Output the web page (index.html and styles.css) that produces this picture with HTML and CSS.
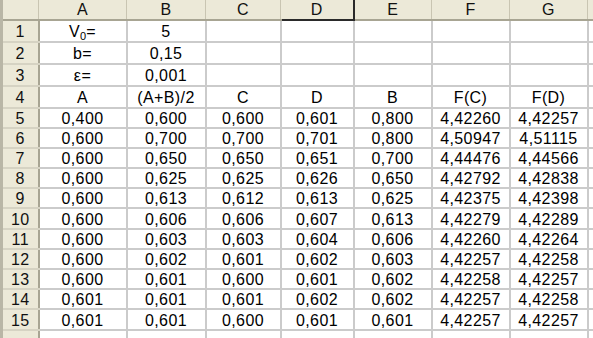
FILE: index.html
```html
<!DOCTYPE html>
<html>
<head>
<meta charset="utf-8">
<link rel="stylesheet" href="styles.css">
</head>
<body>
<table class="sheet">
  <colgroup>
    <col class="c-h"><col class="c-a"><col class="c-b"><col class="c-c"><col class="c-d"><col class="c-e"><col class="c-f"><col class="c-g"><col class="c-x">
  </colgroup>
  <thead>
    <tr class="r-head">
      <th class="corner"></th><th>A</th><th>B</th><th>C</th><th class="active">D</th><th>E</th><th>F</th><th>G</th><th></th>
    </tr>
  </thead>
  <tbody>
    <tr class="r-tall"><th>1</th><td>V<sub>0</sub>=</td><td>5</td><td></td><td></td><td></td><td></td><td></td><td></td></tr>
    <tr class="r-tall"><th>2</th><td>b=</td><td>0,15</td><td></td><td></td><td></td><td></td><td></td><td></td></tr>
    <tr class="r-tall"><th>3</th><td>ε=</td><td>0,001</td><td></td><td></td><td></td><td></td><td></td><td></td></tr>
    <tr class="r-tall"><th>4</th><td>A</td><td>(A+B)/2</td><td>C</td><td>D</td><td>B</td><td>F(C)</td><td>F(D)</td><td></td></tr>
    <tr class="r-n"><th>5</th><td>0,400</td><td>0,600</td><td>0,600</td><td>0,601</td><td>0,800</td><td>4,42260</td><td>4,42257</td><td></td></tr>
    <tr class="r-n"><th>6</th><td>0,600</td><td>0,700</td><td>0,700</td><td>0,701</td><td>0,800</td><td>4,50947</td><td>4,51115</td><td></td></tr>
    <tr class="r-n"><th>7</th><td>0,600</td><td>0,650</td><td>0,650</td><td>0,651</td><td>0,700</td><td>4,44476</td><td>4,44566</td><td></td></tr>
    <tr class="r-n"><th>8</th><td>0,600</td><td>0,625</td><td>0,625</td><td>0,626</td><td>0,650</td><td>4,42792</td><td>4,42838</td><td></td></tr>
    <tr class="r-n"><th>9</th><td>0,600</td><td>0,613</td><td>0,612</td><td>0,613</td><td>0,625</td><td>4,42375</td><td>4,42398</td><td></td></tr>
    <tr class="r-w"><th>10</th><td>0,600</td><td>0,606</td><td>0,606</td><td>0,607</td><td>0,613</td><td>4,42279</td><td>4,42289</td><td></td></tr>
    <tr class="r-n"><th>11</th><td>0,600</td><td>0,603</td><td>0,603</td><td>0,604</td><td>0,606</td><td>4,42260</td><td>4,42264</td><td></td></tr>
    <tr class="r-n"><th>12</th><td>0,600</td><td>0,602</td><td>0,601</td><td>0,602</td><td>0,603</td><td>4,42257</td><td>4,42258</td><td></td></tr>
    <tr class="r-n"><th>13</th><td>0,600</td><td>0,601</td><td>0,600</td><td>0,601</td><td>0,602</td><td>4,42258</td><td>4,42257</td><td></td></tr>
    <tr class="r-n"><th>14</th><td>0,601</td><td>0,601</td><td>0,601</td><td>0,602</td><td>0,602</td><td>4,42257</td><td>4,42258</td><td></td></tr>
    <tr class="r-w"><th>15</th><td>0,601</td><td>0,601</td><td>0,600</td><td>0,601</td><td>0,601</td><td>4,42257</td><td>4,42257</td><td></td></tr>
    <tr class="r-n"><th></th><td></td><td></td><td></td><td></td><td></td><td></td><td></td><td></td></tr>
  </tbody>
</table>
</body>
</html>
```

FILE: styles.css
```css
html, body {
  margin: 0;
  padding: 0;
  background: #ffffff;
  overflow: hidden;
}

.sheet {
  border-collapse: collapse;
  table-layout: fixed;
  width: 610px;
  font-family: "Liberation Sans", Arial, sans-serif;
  font-size: 16px;
  letter-spacing: 0.4px;
  color: #000000;
}

.c-h { width: 37px; }
.c-a { width: 88px; }
.c-b { width: 79px; }
.c-c { width: 75px; }
.c-d { width: 73px; }
.c-e { width: 78px; }
.c-f { width: 78px; }
.c-g { width: 78px; }
.c-x { width: 24px; }

.sheet th,
.sheet td {
  padding: 2px 0 0 0;
  text-align: center;
  vertical-align: middle;
  line-height: 16px;
  white-space: nowrap;
  overflow: hidden;
}

.sheet td {
  border: 2px solid #cbcbcb;
}

.sheet th {
  font-weight: normal;
  background: #ece9d8;
  color: #111111;
}

.r-head { height: 20px; }
.r-tall { height: 22px; }
.r-n { height: 20px; }
.r-w { height: 21px; }

.r-head th {
  border-right: 1px solid #c9c5b2;
  border-bottom: 2px solid #a8a593;
  padding-top: 1px;
}

.r-head th.corner {
  border-left: 3px solid #b9b6a6;
}

.r-head th.active {
  border-bottom: 2px solid #2a2a2a;
  border-right: 2px solid #2a2a2a;
}

tbody th {
  border-left: 3px solid #b9b6a6;
  border-right: 2px solid #a8a593;
  border-bottom: 2px solid #d6d3c3;
}

sub {
  font-size: 11px;
  line-height: 0;
  vertical-align: -3px;
  letter-spacing: 0;
}
```
